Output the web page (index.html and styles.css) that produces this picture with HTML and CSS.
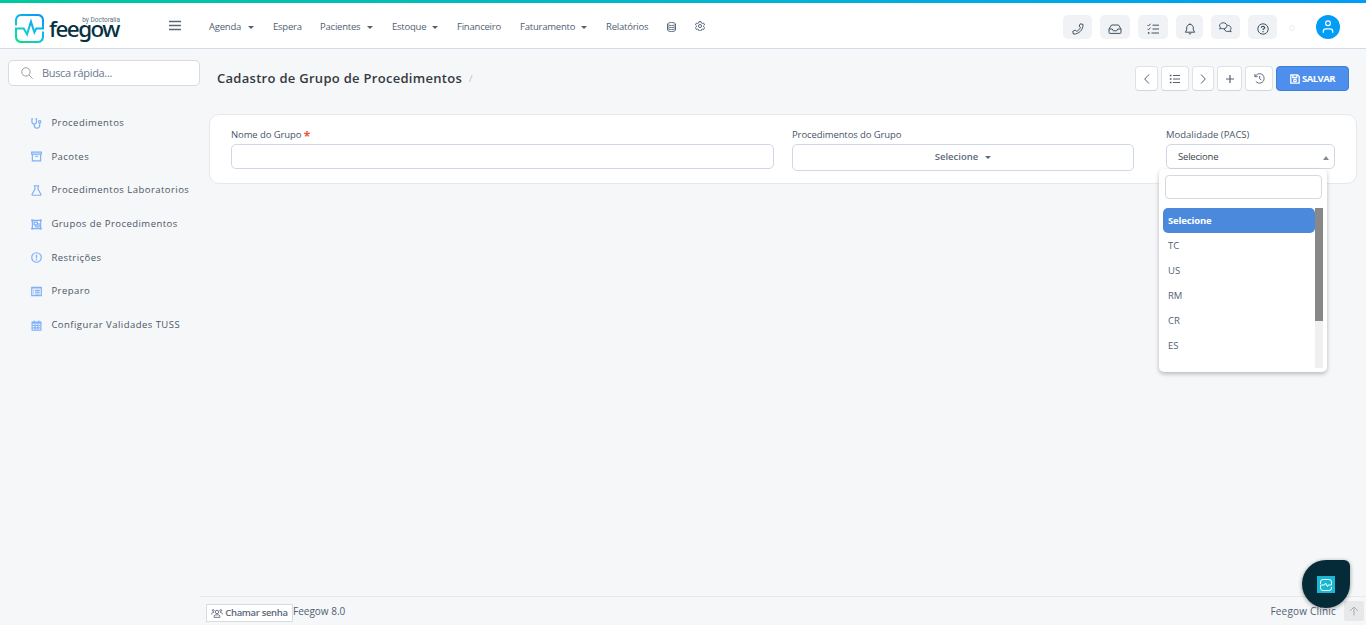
FILE: index.html
```html
<!DOCTYPE html>
<html lang="pt-BR">
<head>
<meta charset="utf-8">
<title>Cadastro de Grupo de Procedimentos</title>
<link rel="stylesheet" href="styles.css">
</head>
<body>
<header class="topbar">
  <div class="brand">
    <svg class="brand-mark" width="29" height="29" viewBox="0 0 30 30" fill="none">
      <defs><linearGradient id="mark" x1="0" y1="1" x2=".7" y2="0"><stop offset="0" stop-color="#00e676"/><stop offset=".45" stop-color="#14c6d8"/><stop offset="1" stop-color="#0a9cf5"/></linearGradient></defs>
      <path d="M1 12V7q0-6 6-6h16q6 0 6 6v8h-7l-2 4-3.500-11-4 13-3.500-6H1v8q0 6 6 6h16q6 0 6-6v-5" stroke="url(#mark)" stroke-width="2.100"/>
    </svg>
    <div class="brand-text"><span class="brand-by">by Doctoralia</span><span class="brand-name">feegow</span></div>
  </div>
  <svg class="burger" width="12" height="12" viewBox="0 0 12 12"><path d="M0 1.500h12M0 5.500h12M0 9.500h12" stroke="#596678" stroke-width="1.300"/></svg>
  <nav class="menu">
    <a class="menu-item w-agenda">Agenda<i class="caret"></i></a>
    <a class="menu-item w-espera">Espera</a>
    <a class="menu-item w-pacientes">Pacientes<i class="caret"></i></a>
    <a class="menu-item w-estoque">Estoque<i class="caret"></i></a>
    <a class="menu-item w-financeiro">Financeiro</a>
    <a class="menu-item w-faturamento">Faturamento<i class="caret"></i></a>
    <a class="menu-item w-relatorios">Relatórios</a>
    <svg class="icon-menu" width="9" height="10" viewBox="0 0 9 10"><g><ellipse cx="4.500" cy="2" rx="4" ry="1.500"/><path d="M.5 2v6c0 2 8 2 8 0V2M.5 4c0 2 8 2 8 0M.5 6c0 2 8 2 8 0"/></g></svg>
    <svg class="icon-menu gear" width="10" height="10" viewBox="0 0 16 16"><path stroke-width="1.500" d="M6.300 1h3.400l.5 2.200 1.300.8 2.200-.7 1.600 2.900-1.600 1.500v1.500l1.600 1.500-1.600 2.900-2.200-.7-1.300.8-.5 2.200H6.300l-.5-2.200-1.300-.8-2.200.7-1.600-2.900 1.600-1.500V7.700L.7 6.200l1.600-2.900 2.200.7 1.300-.8z"/><circle cx="8" cy="8" r="2.500" stroke-width="1.500"/></svg>
  </nav>
  <div class="quick">
    <button class="quick-btn b29"><svg width="12" height="12" viewBox="0 0 12 12"><path d="M8.300.8l2.700.6c.3 5.500-4.200 9.800-9.600 9.700l-.7-2.700 2.600-1.300 1.300 1.300c1.700-.8 3.100-2.200 3.900-3.900L7.100 3.300z"/></svg></button>
    <button class="quick-btn b30"><svg width="14" height="12" viewBox="0 0 14 12"><path d="M1 6l2.500-4h7L13 6v3.500q0 .9-.9.9H1.900q-.9 0-.9-.9V6h3.200l1.100 1.800h3.400L9.800 6H13"/></svg></button>
    <button class="quick-btn b30"><svg width="13" height="12" viewBox="0 0 13 12"><path d="M.5 2l1 1L3.500.8M.5 5.800l1 1 2-2.200M5.500 2.200H12M5.500 6H12M4.500 10H12"/><circle cx="1.700" cy="10" r=".6"/></svg></button>
    <button class="quick-btn b27"><svg width="12" height="12" viewBox="0 0 12 12"><path d="M6 .3v1M1.300 9.200h9.400L9.300 7V5C9.300.2 2.700.2 2.700 5v2zM4.700 10.200q1.300 2 2.600 0"/></svg></button>
    <button class="quick-btn b29 raised"><svg width="13" height="12" viewBox="0 0 13 12"><path d="M1.500 5.800C-.7 3.300 1.500.8 4.200.8c5 0 5 6 0 6-.7 0-1.300-.2-1.900-.4L.6 7.100zM8.300 3.200c3.200.2 4.700 2.800 3 5l.9 1.600-2-.6c-2 .8-4.300.2-5-2.400"/></svg></button>
    <button class="quick-btn b29"><svg width="12" height="12" viewBox="0 0 12 12"><circle cx="6" cy="6" r="5.200"/><path d="M4.300 4.800c0-2 3.400-1.900 3.400-.1C7.700 5.800 6 5.800 6 7M6 8.100v1.100" stroke-width="1.200"/></svg></button>
    <span class="dot"></span>
    <span class="avatar"><svg width="12" height="14" viewBox="0 0 12 14"><circle cx="6" cy="3.300" r="2.400"/><path d="M1.300 12.700v-1.300q0-2.600 2.600-2.600h4.200q2.600 0 2.600 2.600v1.300"/></svg></span>
  </div>
</header>
<div class="shell">
  <aside class="side">
    <label class="search"><svg width="12" height="12" viewBox="0 0 12 12"><circle cx="4.900" cy="4.900" r="4.200"/><path d="M8 8l3.700 3.700"/></svg><span>Busca rápida...</span></label>
    <ul class="side-list">
      <li><svg viewBox="0 0 12 12"><path d="M2.200 1H1v3c0 3.500 5 3.500 5 0V1H4.800M3.500 6.500V8c0 4.200 6 4.200 6 0V5.500"/><circle cx="9.500" cy="4.200" r="1.300"/></svg><span>Procedimentos</span></li>
      <li><svg viewBox="0 0 12 12"><path d="M.7 1.200h10.600v2.300H.7zM1.500 3.500v7.200h9V3.500M4.200 5.700h3.600"/></svg><span>Pacotes</span></li>
      <li><svg viewBox="0 0 12 12"><path d="M3 .8h6M4.300.8v4L1.200 10q-.4 1.200.8 1.200h8q1.200 0 .8-1.200L7.700 4.800v-4"/></svg><span>Procedimentos Laboratorios</span></li>
      <li><svg viewBox="0 0 12 12"><path d="M1.500 1.500h9v9h-9zM3.400 3.500h3.500v3H3.400zM7.500 5.200h1.300v3.300H5.200V7"/><path d="M.2 1.500h2.400M9.400 1.500h2.400M.2 10.500h2.400M9.400 10.500h2.400" stroke-width="2"/></svg><span>Grupos de Procedimentos</span></li>
      <li><svg viewBox="0 0 12 12"><circle cx="6" cy="6" r="5.200"/><path d="M6 3v3.700M6 7.800V9.200" stroke-width="1.500"/></svg><span>Restrições</span></li>
      <li><svg viewBox="0 0 12 12"><path d="M.8 1.500h10.400v9H.8zM.8 2.200h10.400M2.500 4.700h1M4.500 4.700h5M2.500 6.700h1M4.500 6.700h5M2.500 8.700h1M4.500 8.700h5"/></svg><span>Preparo</span></li>
      <li><svg viewBox="0 0 12 12"><path d="M1.200 2.200h9.600v9H1.200zM1.200 3.500h9.600M3.500.5v2M8.500.5v2M2 6h8M2 8.500h8M4.500 4.500v6M7.500 4.500v6"/></svg><span>Configurar Validades TUSS</span></li>
    </ul>
  </aside>
  <main class="main">
    <div class="heading">
      <h1>Cadastro de Grupo de Procedimentos</h1><span class="slash">/</span>
      <div class="tools">
        <button class="tool b23"><svg width="12" height="12" viewBox="0 0 12 12"><path d="M8 1.500L3.700 6 8 10.500"/></svg></button>
        <button class="tool b28"><svg width="12" height="12" viewBox="0 0 12 12"><path d="M4 2.500h7M4 6h7M4 9.500h7"/><path d="M.8 2.500h1.700M.8 6h1.700M.8 9.500h1.700" stroke-width="1.700"/></svg></button>
        <button class="tool b22"><svg width="12" height="12" viewBox="0 0 12 12"><path d="M4 1.500L8.300 6 4 10.500"/></svg></button>
        <button class="tool b25"><svg width="10" height="10" viewBox="0 0 10 10"><path d="M5 1v8M1 5h8" stroke-width="1.200"/></svg></button>
        <button class="tool b28"><svg width="11" height="11" viewBox="0 0 12 12"><path d="M1 1v3h3M1.300 3.700C4-.8 11-.2 11 6c0 5.200-6.200 6.600-9 3.200M6.200 3.300v3L8 7.500"/></svg></button>
        <button class="save"><svg width="10" height="10" viewBox="0 0 10 10"><path d="M.8.8h6.700l1.700 1.700v6.700H.8zM2.800 1v2.500h4V1"/><circle cx="5" cy="6.400" r="1.300"/></svg>SALVAR</button>
      </div>
    </div>
    <section class="card">
      <div class="field f-name"><label>Nome do Grupo <b class="req">*</b></label><div class="input"></div></div>
      <div class="field f-proc"><label>Procedimentos do Grupo</label><div class="multi">Selecione<i class="caret"></i></div></div>
      <div class="field f-mod"><label>Modalidade (PACS)</label>
        <div class="select">Selecione<i class="caret up"></i></div>
        <div class="drop">
          <div class="drop-search"></div>
          <div class="drop-body">
            <ul><li class="on">Selecione</li><li>TC</li><li>US</li><li>RM</li><li>CR</li><li>ES</li></ul>
            <div class="bar"><div class="thumb"></div></div>
          </div>
        </div>
      </div>
    </section>
    <footer class="foot">
      <button class="call"><svg width="13" height="10" viewBox="0 0 13 10"><circle cx="6.500" cy="3.300" r="1.900"/><circle cx="2.300" cy="1.700" r="1"/><circle cx="10.700" cy="1.700" r="1"/><path d="M3.300 9.300v-1q0-1.800 1.800-1.800h2.800q1.800 0 1.800 1.800v1zM.5 6c0-2 1.200-2.200 2.500-2M12.500 6c0-2-1.200-2.200-2.500-2"/></svg>Chamar senha</button>
      <span class="version">Feegow 8.0</span>
      <span class="clinic">Feegow Clinic</span>
      <span class="to-top"><svg width="10" height="10" viewBox="0 0 10 10"><path d="M5 9.500V1M1 5l4-4 4 4"/></svg></span>
    </footer>
  </main>
</div>
<div class="chat"><span><svg width="14" height="14" viewBox="0 0 14 14"><path d="M1.500 6V4q0-2.500 2.500-2.500h6q2.500 0 2.500 2.500v3H9.300l-.8 1.500-2-3.500-1 2H1.500v3q0 2.500 2.500 2.500h6q2.500 0 2.500-2.500V9"/></svg></span></div>
</body>
</html>
```
FILE: styles.css
```css
* { box-sizing: border-box; }
body { margin: 0; height: 625px; overflow: hidden; display: flex; flex-direction: column; background: #f5f7f9; color: #526074; font: 9.5px/14px "Open Sans", "Noto Sans", sans-serif; }
svg { display: block; flex: none; fill: none; stroke: currentColor; }
button { margin: 0; padding: 0; font: inherit; color: inherit; border: 0; display: flex; align-items: center; justify-content: center; }
ul { list-style: none; margin: 0; padding: 0; }

.topbar { height: 49px; flex: none; display: flex; background: linear-gradient(90deg, #00c89c, #00b4d2 55%, #009cf7) top / 100% 3px no-repeat #fff; border-bottom: 1px solid #d3dbe8; }
.brand { width: 169px; padding: 14px 0 0 15px; display: flex; }
.brand-mark { stroke: none; }
.brand-text { width: 71px; margin-left: 5px; display: flex; flex-direction: column; }
.brand-by { align-self: flex-end; font: 6.5px/8px Roboto, sans-serif; color: #5d7180; margin: 2px 0 0; white-space: nowrap; }
.brand-name { font: 500 22.5px/22px "Noto Sans", sans-serif; letter-spacing: -1.55px; color: #07313f; margin-top: -6px; }
.burger { margin-top: 20px; }
.menu { display: flex; gap: 19px; padding: 20px 0 0 28px; letter-spacing: -.22px; }
.menu-item { height: 14px; display: flex; align-items: center; justify-content: space-between; white-space: nowrap; }
.w-agenda { width: 45px; }
.w-espera { width: 28px; }
.w-pacientes { width: 53px; }
.w-estoque { width: 46px; }
.w-financeiro { width: 44px; }
.w-faturamento { width: 67px; }
.w-relatorios { width: 42px; }
.icon-menu { margin-top: 2px; stroke-width: .9; }
.gear { margin-top: 1px; }
.caret { border: 3px solid transparent; border-top-color: currentColor; border-bottom: 0; }
.caret.up { border-top: 0; border-bottom: 4px solid #858a90; margin-top: 2px; }
.quick { margin-left: auto; display: flex; gap: 8px; padding-top: 15px; }
.quick-btn { height: 24px; padding-top: 4px; border-radius: 5px; background: #f0f2f6; color: #3f5463; }
.raised { padding-top: 1px; }
.b22 { width: 22px; } .b23 { width: 23px; } .b25 { width: 25px; } .b27 { width: 27px; } .b28 { width: 28px; } .b29 { width: 29px; } .b30 { width: 30px; }
.dot { width: 6px; height: 6px; margin: 10px 0 0 4px; border: 1px solid #e9ebee; border-radius: 50%; }
.avatar { width: 24px; height: 24px; margin: 0 26px 0 13px; border-radius: 50%; background: #049df6; color: #fff; display: flex; align-items: center; justify-content: center; }
.avatar svg { stroke-width: 1.2; margin-top: -1px; }

.shell { flex: 1; display: flex; }
.side { width: 200px; padding: 11px 0 0 8px; }
.search { height: 26px; display: flex; align-items: center; gap: 9px; padding-left: 12px; border: 1px solid #d9dcdf; border-radius: 5px; background: #fff; color: #999fa5; }
.search span { color: #6a7a92; font-size: 11px; letter-spacing: -.33px; }
.side-list { padding-top: 20.3px; }
.side-list li { height: 33.66px; display: flex; align-items: center; gap: 9.4px; padding-left: 23px; letter-spacing: .46px; white-space: nowrap; color: #4c5664; }
.side-list svg { width: 11px; height: 11px; color: #7fb0fa; stroke-width: 1.3; }

.main { flex: 1; display: flex; flex-direction: column; }
.heading { height: 65px; padding: 17px 17px 0; display: flex; }
h1 { margin: 0; width: 245px; font-size: 13px; line-height: 24px; font-weight: 600; color: #363a40; letter-spacing: .29px; white-space: nowrap; }
.slash { margin-left: 7px; line-height: 26px; color: #b8bcc0; }
.tools { margin-left: auto; display: flex; gap: 3px; }
.tool { height: 25px; background: #fff; border: 1px solid #e0e2e5; border-bottom-color: #d2d5d9; border-radius: 4px; }
.save { width: 73px; height: 25px; gap: 2px; background: #4e8eec; border: 1px solid #3f7ed6; border-radius: 4px; color: #fff; font-weight: 700; letter-spacing: -.5px; }
.save svg { stroke-width: 1.3; }
.card { width: 1148px; height: 70px; margin-left: 9px; padding: 12px 21px; display: flex; border: 1px solid #e6e8ee; border-radius: 10px; background: #fff; }
.field { position: relative; }
.field label { display: block; height: 17px; line-height: 15px; white-space: nowrap; letter-spacing: -.1px; color: #485569; }
.f-mod label { letter-spacing: 0; }
.f-name { width: 543px; }
.f-proc { width: 342px; margin-left: 18px; }
.f-mod { width: 169px; margin-left: 32px; }
.req { color: #f4513f; font-size: 12px; line-height: 8px; vertical-align: -3px; }
.input, .select, .multi { height: 25px; border: 1px solid #d0d7e6; border-radius: 5px; background: #fff; display: flex; align-items: center; }
.multi { height: 27px; justify-content: center; gap: 7px; font-weight: 600; color: #5d697b; padding-bottom: 2px; }
.multi .caret { margin-top: 2px; }
.select { justify-content: space-between; padding: 0 5px 0 11px; color: #3e444c; letter-spacing: -.2px; }
.drop { position: absolute; top: 42px; left: -7px; width: 168px; height: 203px; padding: 6px 4px; background: #fff; border-radius: 5px; box-shadow: 0 2px 4px rgba(0,0,0,.25); z-index: 1; }
.drop-search { height: 24px; margin: 0 1px 9px 2px; border: 1px solid #d6d8da; border-radius: 4px; }
.drop-body { display: flex; height: 160px; }
.drop ul { flex: 1; }
.drop li { height: 25px; line-height: 25px; padding-left: 5px; }
.drop li.on { background: #4a89dc; color: #fff; font-weight: 700; letter-spacing: -.15px; border-radius: 5px; }
.bar { width: 8px; background: #f0f0f0; }
.thumb { height: 113px; background: #888; }
.foot { margin-top: auto; height: 29px; display: flex; padding: 7px 2px 0 6px; border-top: 1px solid #e7e9eb; }
.call { width: 87px; height: 18px; gap: 2px; background: #fff; border: 1px solid #d9dbde; font-weight: 600; color: #5d697b; letter-spacing: -.33px; white-space: nowrap; }
.call svg { width: 12px; height: 9px; }
.version, .clinic { font-size: 10px; line-height: 15px; }
.clinic { margin-left: auto; letter-spacing: .2px; }
.to-top { width: 20px; height: 20px; margin: -3px 0 0 8px; background: #e7e8e9; border-radius: 2px; color: #aaadb0; display: flex; align-items: center; justify-content: center; }
.chat { position: absolute; left: 1302px; top: 560px; width: 48px; height: 48px; border-radius: 24px 6px 24px 24px; background: #062b38; box-shadow: 0 1px 4px rgba(0,0,0,.4); display: flex; align-items: center; justify-content: center; }
.chat span { width: 18px; height: 17px; display: flex; align-items: center; justify-content: center; background: #16b8d4; color: #fff; margin-top: 1px; }
```
